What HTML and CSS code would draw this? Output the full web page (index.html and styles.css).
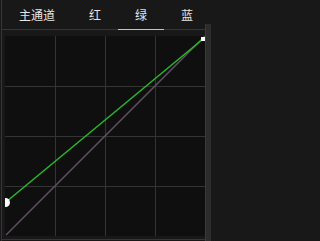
FILE: index.html
```html
<!DOCTYPE html>
<html lang="zh">
<head>
<meta charset="utf-8">
<link rel="stylesheet" href="styles.css">
</head>
<body>
<div class="frame">
  <div class="main">
    <div class="tabs">
      <div class="tab">主通道</div>
      <div class="tab">红</div>
      <div class="tab active">绿</div>
      <div class="tab">蓝</div>
    </div>
    <div class="graph">
      <svg width="200" height="200" viewBox="0 0 200 200">
        <rect x="0" y="0" width="200" height="200" fill="#0f0f0f"/>
        <g stroke="#343434" stroke-width="1">
          <line x1="50.5" y1="0" x2="50.5" y2="200"/>
          <line x1="100.5" y1="0" x2="100.5" y2="200"/>
          <line x1="150.5" y1="0" x2="150.5" y2="200"/>
          <line x1="0" y1="50.5" x2="200" y2="50.5"/>
          <line x1="0" y1="100.5" x2="200" y2="100.5"/>
          <line x1="0" y1="150.5" x2="200" y2="150.5"/>
        </g>
        <line x1="1" y1="199" x2="200" y2="0" stroke="#5e5262" stroke-width="1.5"/>
        <line x1="1" y1="166" x2="198" y2="3" stroke="#2cb82c" stroke-width="1.5"/>
        <circle cx="0.5" cy="166.5" r="4.5" fill="#ffffff"/>
        <rect x="196" y="1" width="4" height="4" fill="#ffffff"/>
      </svg>
    </div>
    <div class="bottom"></div>
  </div>
  <div class="scroll"></div>
</div>
</body>
</html>
```
FILE: styles.css
```css
html, body {
  margin: 0;
  padding: 0;
  background: #181818;
  width: 211px;
  height: 241px;
  overflow: hidden;
  font-family: "Noto Sans CJK SC", "Noto Sans", sans-serif;
}
.frame {
  margin-left: 1px;
  border-left: 1px solid #363636;
  height: 241px;
  display: flex;
}
.main {
  width: 203px;
  display: flex;
  flex-direction: column;
}
.tabs {
  display: flex;
  height: 29px;
  border-bottom: 1px solid #363636;
}
.tab {
  position: relative;
  padding: 0 17px;
  font-size: 12px;
  line-height: 29px;
  color: #e6e6e6;
  white-space: nowrap;
}
.tab.active::after {
  content: "";
  position: absolute;
  left: 0;
  right: 0;
  bottom: -1px;
  height: 1px;
  background: #e8d21c;
}
.graph {
  margin: 6px 0 0 3px;
  width: 200px;
  height: 200px;
}
.graph svg {
  display: block;
}
.bottom {
  margin-top: 3px;
  height: 1px;
  background: #363636;
}
.scroll {
  width: 6px;
  margin-top: 24px;
  background: #2c2c2c;
  border-left: 1px solid #3a3a3a;
  box-sizing: border-box;
}
```
